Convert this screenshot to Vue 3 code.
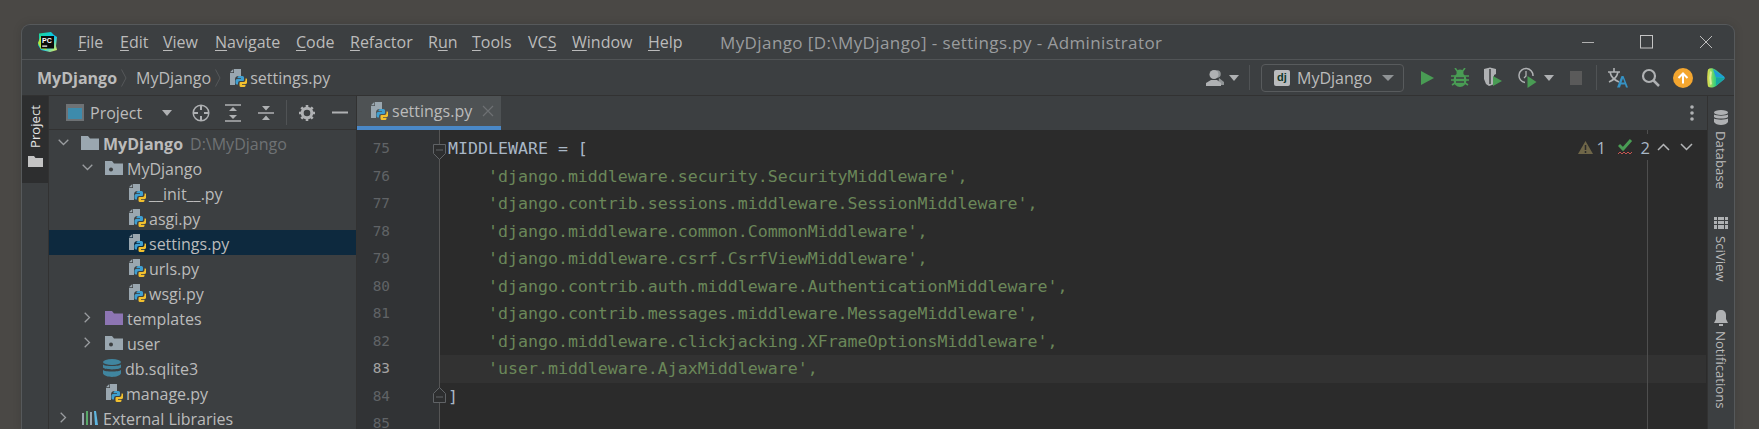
<script setup>
const menus = [
  ['', 'F', 'ile', 42], ['', 'E', 'dit', 43], ['', 'V', 'iew', 52], ['', 'N', 'avigate', 81],
  ['', 'C', 'ode', 54], ['', 'R', 'efactor', 78], ['R', 'u', 'n', 44], ['', 'T', 'ools', 56],
  ['VC', 'S', '', 44], ['', 'W', 'indow', 76], ['', 'H', 'elp', 42]
]
const tree = [
  { name: 'MyDjango', hint: 'D:\\MyDjango', icon: 'root', arrow: 'down', indent: 9, bold: true },
  { name: 'MyDjango', icon: 'pkg', arrow: 'down', indent: 33 },
  { name: '__init__.py', icon: 'py', indent: 79 },
  { name: 'asgi.py', icon: 'py', indent: 79 },
  { name: 'settings.py', icon: 'py', indent: 79, selected: true },
  { name: 'urls.py', icon: 'py', indent: 79 },
  { name: 'wsgi.py', icon: 'py', indent: 79 },
  { name: 'templates', icon: 'tpl', arrow: 'right', indent: 33 },
  { name: 'user', icon: 'pkg', arrow: 'right', indent: 33 },
  { name: 'db.sqlite3', icon: 'db', indent: 54 },
  { name: 'manage.py', icon: 'py', indent: 56 },
  { name: 'External Libraries', icon: 'lib', arrow: 'right', indent: 9 }
]
const lines = [
  { n: 75, t: 'MIDDLEWARE = [', c: 'plain' },
  { n: 76, t: "    'django.middleware.security.SecurityMiddleware'," },
  { n: 77, t: "    'django.contrib.sessions.middleware.SessionMiddleware'," },
  { n: 78, t: "    'django.middleware.common.CommonMiddleware'," },
  { n: 79, t: "    'django.middleware.csrf.CsrfViewMiddleware'," },
  { n: 80, t: "    'django.contrib.auth.middleware.AuthenticationMiddleware'," },
  { n: 81, t: "    'django.contrib.messages.middleware.MessageMiddleware'," },
  { n: 82, t: "    'django.middleware.clickjacking.XFrameOptionsMiddleware'," },
  { n: 83, t: "    'user.middleware.AjaxMiddleware',", cur: true },
  { n: 84, t: ']', c: 'plain' },
  { n: 85, t: '' }
]
</script>

<template>
  <div class="window">
    <svg class="defs" width="0" height="0">
      <symbol id="py" viewBox="0 0 18 20">
        <path d="M5 1h7v7H9.500A3.500 3.500 0 0 0 6 11.500V17H1V5h4z" fill="#9aa7b0" />
        <path d="M1 4.300 4.300 1v3.300z" fill="#9aa7b0" />
        <path d="M10 8h3.500A1.500 1.500 0 0 1 15 9.500V12a1 1 0 0 1-1 1h-3a2 2 0 0 0-2 2v1.500H8a1.500 1.500 0 0 1-1.500-1.500v-2.500A1.500 1.500 0 0 1 8 11h4v-.7H8.500V9.500A1.500 1.500 0 0 1 10 8z" fill="#3f9fd0" />
        <path d="M15.500 19h-3.500A1.500 1.500 0 0 1 10.500 17.500V15a1 1 0 0 1 1-1h3a2 2 0 0 0 2-2v-1.500h.5a1 1 0 0 1 1 1.300v3.200A1.500 1.500 0 0 1 16.500 16H13v.7h3.500V17.500A1.500 1.500 0 0 1 15.500 19z" fill="#f2c02e" />
      </symbol>
      <symbol id="folder" viewBox="0 0 18 16">
        <path d="M0 1h7l2 2.500h9V15H0z" fill="currentColor" />
      </symbol>
    </svg>

    <header class="titlebar">
      <svg class="logo" width="21" height="20" viewBox="0 0 21 20">
        <defs>
          <linearGradient id="pcg" x1="0" y1="0" x2="1" y2="1">
            <stop offset="0" stop-color="#21d789" />
            <stop offset=".55" stop-color="#07c3f2" />
            <stop offset="1" stop-color="#fcf84a" />
          </linearGradient>
        </defs>
        <path d="M2 1.500 14 0l3 3 3 2-1 9 1 4-7 2-9-2-3-5 1-5z" fill="url(#pcg)" />
        <path d="M1 11 4 4l6 14-6-1z" fill="#b6e63a" />
        <rect x="4" y="4" width="13" height="12.500" fill="#0b0b0b" />
        <text x="5" y="10.500" class="logo-text">PC</text>
        <rect x="5.200" y="13.500" width="5" height="1.200" fill="#fff" />
      </svg>
      <nav class="menu">
        <span v-for="m in menus" :key="m[1] + m[2]" class="menu-item" :style="{ width: m[3] + 'px' }">{{ m[0] }}<u>{{ m[1] }}</u>{{ m[2] }}</span>
      </nav>
      <span class="wintitle">MyDjango [D:\MyDjango] - settings.py - Administrator</span>
      <div class="winbtns">
        <svg width="14" height="14" viewBox="0 0 14 14"><path d="M1 7.500h12" stroke="#b0b0b0" fill="none" /></svg>
        <svg width="14" height="14" viewBox="0 0 14 14"><rect x=".5" y=".5" width="12" height="12.500" stroke="#c4c4c4" fill="none" /></svg>
        <svg width="14" height="14" viewBox="0 0 14 14"><path d="M1 1l12 12M13 1 1 13" stroke="#bdbdbd" fill="none" /></svg>
      </div>
    </header>

    <div class="toolbar">
      <div class="crumbs">
        <b class="crumb-bold">MyDjango</b>
        <svg class="crumb-sep" width="6" height="18" viewBox="0 0 6 18"><path d="M.5.500 5 9 .5 17.500" stroke="#55585a" fill="none" /></svg>
        <span class="crumb">MyDjango</span>
        <svg class="crumb-sep" width="6" height="18" viewBox="0 0 6 18"><path d="M.5.500 5 9 .5 17.500" stroke="#55585a" fill="none" /></svg>
        <svg class="crumb-icon" width="18" height="20"><use href="#py" /></svg>
        <span class="crumb-file">settings.py</span>
      </div>
      <div class="actions">
        <svg class="a-user" width="19" height="18" viewBox="0 0 19 18">
          <circle cx="11" cy="5" r="3.800" fill="#8f9395" />
          <path d="M13 9l5 4v3h-6z" fill="#8f9395" />
          <circle cx="8" cy="5.500" r="4.500" fill="#afb1b3" />
          <path d="M0 17v-3l5-3h6l4 3v3z" fill="#afb1b3" />
        </svg>
        <i class="tri a-tri1"></i>
        <i class="sep a-sep1"></i>
        <div class="combo">
          <span class="dj">dj</span>
          <span class="combo-name">MyDjango</span>
          <i class="tri tri-big"></i>
        </div>
        <svg class="a-play" width="13" height="14" viewBox="0 0 13 14"><path d="M0 0l13 7-13 7z" fill="#499c54" /></svg>
        <svg class="a-bug" width="18" height="20" viewBox="0 0 18 20">
          <ellipse cx="9" cy="12" rx="6.500" ry="7" fill="#499c54" />
          <path d="M4 0l3 4M14 0l-3 4M0 8h4M18 8h-4M0 12h4M18 12h-4M1 17l3-2M17 17l-3-2" stroke="#499c54" stroke-width="1.600" fill="none" />
          <circle cx="9" cy="5" r="3.500" fill="#499c54" />
          <path d="M5 10h8M5 14h8" stroke="#3c3f41" stroke-width="1.500" />
        </svg>
        <svg class="a-shield" width="19" height="21" viewBox="0 0 19 21">
          <path d="M1 2l6-1.500L13 2v5l-2 1v9l-2 1-3 1-3-2-2-5z" fill="#afb1b3" />
          <path d="M7 2v15" stroke="#3c3f41" stroke-width="1.500" />
          <path d="M10 9l9 5-9 5z" fill="#499c54" />
        </svg>
        <svg class="a-clock" width="22" height="21" viewBox="0 0 22 21">
          <path d="M8 15.500A7 7 0 1 1 16 9" stroke="#afb1b3" stroke-width="1.500" fill="none" />
          <path d="M9 4v5l-2 2" stroke="#afb1b3" stroke-width="1.300" fill="none" />
          <path d="M10.500 9l9 6-9 6z" fill="#499c54" />
        </svg>
        <i class="tri a-tri2"></i>
        <i class="a-stop"></i>
        <i class="sep a-sep2"></i>
        <svg class="a-trans" width="21" height="21" viewBox="0 0 21 21">
          <path d="M1 5h12M7 1v4M3 5c1 5 4 8 9 10M11 5c-1 5-4 8-9 10" stroke="#afb1b3" stroke-width="1.600" fill="none" />
          <path d="M10 20.500 14.500 9h2L21 20.500h-2l-1-3h-4l-1 3zM14.500 15.500h3l-1.500-4z" fill="#3592c4" fill-rule="evenodd" />
        </svg>
        <svg class="a-search" width="19" height="19" viewBox="0 0 19 19">
          <circle cx="8" cy="8" r="6" stroke="#afb1b3" stroke-width="2.200" fill="none" />
          <path d="M12.500 12.500 18 18" stroke="#afb1b3" stroke-width="2.500" />
        </svg>
        <svg class="a-up" width="20" height="20" viewBox="0 0 20 20">
          <circle cx="10" cy="10" r="10" fill="#f4a62f" />
          <path d="M10 15.500V6M5.500 10 10 5.500l4.500 4.500" stroke="#fff" stroke-width="2" fill="none" />
        </svg>
        <svg class="a-ai" width="18" height="20" viewBox="0 0 18 20">
          <defs>
            <linearGradient id="aig" x1="0" y1="0" x2="1" y2="0">
              <stop offset="0" stop-color="#e8e04a" />
              <stop offset=".45" stop-color="#36d07c" />
              <stop offset="1" stop-color="#18a8e0" />
            </linearGradient>
          </defs>
          <path d="M1 1.500C3 -.5 6 0 9 2l8 6.500c1 1 1 2 0 3L9 18c-3 2-6 2-8 .500-1-5-1-12 0-17z" fill="url(#aig)" />
          <path d="M6 1 17 9 9 9.500z" fill="#1f9bd8" />
          <path d="M9 9.500 17.500 10 9 18z" fill="#17a6a0" />
          <path d="M4 3.500c-1 4-1 9 0 13" stroke="#f5f7b8" stroke-width="2" fill="none" opacity=".7" />
        </svg>
      </div>
    </div>

    <div class="workspace">
      <aside class="stripe-left">
        <div class="stripe-project">
          <span class="stripe-project-label">Project</span>
          <svg class="stripe-project-icon" width="15" height="11" viewBox="0 0 15 11"><path d="M0 0h6l1.500 2H15v9H0z" fill="#c4c4c4" /></svg>
        </div>
      </aside>

      <section class="project">
        <div class="project-head">
          <svg class="ph-frame" width="18" height="17" viewBox="0 0 18 17">
            <rect width="18" height="17" fill="#6e7275" />
            <rect x="2" y="4" width="14" height="11" fill="#3d8bac" />
          </svg>
          <span class="ph-title">Project</span>
          <i class="tri ph-tri"></i>
          <svg class="ph-target" width="18" height="18" viewBox="0 0 18 18">
            <circle cx="9" cy="9" r="7.800" stroke="#afb1b3" stroke-width="1.500" fill="none" />
            <path d="M9 1v5M9 12v5M1 9h5M12 9h5" stroke="#afb1b3" stroke-width="2" />
          </svg>
          <svg class="ph-expand" width="16" height="18" viewBox="0 0 16 18">
            <path d="M0 1h16M0 17h16" stroke="#afb1b3" stroke-width="1.600" />
            <path d="M4 7l4-4 4 4zM4 11h8l-4 4z" fill="#afb1b3" />
          </svg>
          <svg class="ph-collapse" width="16" height="18" viewBox="0 0 16 18">
            <path d="M0 9h16" stroke="#afb1b3" stroke-width="1.600" />
            <path d="M4 2h8L8 6.500zM4 16l4-4.500 4 4.500z" fill="#afb1b3" />
          </svg>
          <i class="sep ph-sep"></i>
          <svg class="ph-gear" width="16" height="16" viewBox="0 0 16 16">
            <circle cx="8" cy="8" r="4.800" stroke="#afb1b3" stroke-width="3" fill="none" />
            <path d="M8 0v3M8 13v3M0 8h3M13 8h3M2.300 2.300l2.200 2.200M11.500 11.500l2.200 2.200M13.700 2.300l-2.200 2.200M4.500 11.500l-2.200 2.200" stroke="#afb1b3" stroke-width="2.600" />
          </svg>
          <svg class="ph-minus" width="16" height="3" viewBox="0 0 16 3"><path d="M0 1.500h16" stroke="#afb1b3" stroke-width="2" /></svg>
        </div>
        <ul class="tree">
          <li v-for="(r, i) in tree" :key="i" class="row" :class="{ selected: r.selected }" :style="{ paddingLeft: r.indent + 'px' }">
            <svg v-if="r.arrow === 'down'" class="chev" width="11" height="7" viewBox="0 0 11 7"><path d="M.7.700 5.500 5.500 10.300.700" stroke="#9a9da0" stroke-width="1.300" fill="none" /></svg>
            <svg v-else-if="r.arrow === 'right'" class="chev" width="11" height="11" viewBox="0 0 11 11"><path d="M2.700.700 7.500 5.500 2.700 10.300" stroke="#9a9da0" stroke-width="1.300" fill="none" /></svg>
            <svg v-if="r.icon === 'root'" class="ic" width="18" height="16" style="color:#9aa7b0"><use href="#folder" /></svg>
            <svg v-else-if="r.icon === 'tpl'" class="ic" width="18" height="16" style="color:#8d75b3"><use href="#folder" /></svg>
            <svg v-else-if="r.icon === 'pkg'" class="ic" width="18" height="16" viewBox="0 0 18 16">
              <path d="M0 1h7l2 2.500h9V15H0z" fill="#9aa7b0" />
              <circle cx="6" cy="9.500" r="2" fill="#3c3f41" />
            </svg>
            <svg v-else-if="r.icon === 'db'" class="ic" width="18" height="18" viewBox="0 0 18 18">
              <ellipse cx="9" cy="3" rx="9" ry="3" fill="#40859f" />
              <path d="M0 5.500C2 7.500 16 7.500 18 5.500V8.500C16 11 2 11 0 8.500zM0 11C2 13 16 13 18 11v3.500C16 19 2 19 0 14.500z" fill="#40859f" />
            </svg>
            <svg v-else-if="r.icon === 'lib'" class="ic" width="18" height="16" viewBox="0 0 18 16">
              <path d="M1 3h2v12H1z" fill="#9aa7b0" />
              <path d="M5 1h2v14H5z" fill="#59a869" />
              <path d="M9 2h2v13H9z" fill="#9aa7b0" />
              <path d="M13 1h2l2 14h-3z" fill="#5fb6e0" />
            </svg>
            <svg v-else class="ic ic-py" width="18" height="20"><use href="#py" /></svg>
            <span class="row-name" :class="{ bold: r.bold }">{{ r.name }}</span>
            <span v-if="r.hint" class="row-hint">{{ r.hint }}</span>
          </li>
        </ul>
      </section>

      <section class="main">
        <div class="tabs">
          <div class="tab">
            <svg class="tab-icon" width="18" height="20"><use href="#py" /></svg>
            <span class="tab-name">settings.py</span>
            <svg class="tab-x" width="12" height="12" viewBox="0 0 12 12"><path d="M1 1l10 10M11 1 1 11" stroke="#6d7073" stroke-width="1.200" /></svg>
          </div>
          <svg class="tabs-more" width="4" height="16" viewBox="0 0 4 16">
            <circle cx="2" cy="2" r="1.800" fill="#afb1b3" />
            <circle cx="2" cy="8" r="1.800" fill="#afb1b3" />
            <circle cx="2" cy="14" r="1.800" fill="#afb1b3" />
          </svg>
        </div>
        <div class="editor">
          <div class="gutter">
            <div v-for="l in lines" :key="l.n" class="num" :class="{ cur: l.cur }">{{ l.n }}</div>
          </div>
          <div class="code">
            <div v-for="l in lines" :key="l.n" class="line" :class="[l.c || 'str', { cur: l.cur }]">{{ l.t }}</div>
          </div>
          <i class="margin-line"></i>
          <svg class="fold fold-open" width="13" height="16" viewBox="0 0 13 16"><path d="M.5.500h12v9L6.500 15.500.5 9.500z" stroke="#606366" fill="#2d2e2f" /><path d="M3 6h7" stroke="#606366" /></svg>
          <svg class="fold fold-close" width="13" height="16" viewBox="0 0 13 16"><path d="M.5 6.500 6.500.500l6 6v9H.5z" stroke="#606366" fill="#2d2e2f" /><path d="M3 10h7" stroke="#606366" /></svg>
          <div class="inspect">
            <svg width="15" height="13" viewBox="0 0 15 13"><path d="M7.500 0 15 13H0z" fill="#6f6648" /><path d="M7.500 4v5M7.500 10v2" stroke="#2b2b2b" stroke-width="1.500" /></svg>
            <span class="ins-w">1</span>
            <svg class="ins-check" width="15" height="17" viewBox="0 0 15 17"><path d="M1 6l4 4 8-9" stroke="#499c54" stroke-width="3" fill="none" /><path d="M0 15l2-2 2 2 2-2 2 2 2-2 2 2 2-2" stroke="#c75450" fill="none" /></svg>
            <span class="ins-n">2</span>
            <svg class="ins-up" width="13" height="8" viewBox="0 0 13 8"><path d="M1 7 6.500 1.500 12 7" stroke="#b4b6b8" stroke-width="1.500" fill="none" /></svg>
            <svg class="ins-down" width="13" height="8" viewBox="0 0 13 8"><path d="M1 1 6.500 6.500 12 1" stroke="#b4b6b8" stroke-width="1.500" fill="none" /></svg>
          </div>
        </div>
      </section>

      <aside class="stripe-right">
        <svg class="sr-db" width="14" height="15" viewBox="0 0 14 15">
          <ellipse cx="7" cy="2.500" rx="7" ry="2.500" fill="#afb1b3" />
          <path d="M0 4.500C2 6 12 6 14 4.500V7C12 9 2 9 0 7zM0 8.500C2 10 12 10 14 8.500V12C12 16 2 16 0 12z" fill="#afb1b3" />
        </svg>
        <span class="sr-label sr-l1">Database</span>
        <svg class="sr-sci" width="14" height="12" viewBox="0 0 14 12">
          <path d="M0 0h14v12H0z" fill="#afb1b3" />
          <path d="M0 3.500h14M0 7.500h14M3.500 0v12M10.500 0v12" stroke="#3c3f41" stroke-width="1" />
        </svg>
        <span class="sr-label sr-l2">SciView</span>
        <svg class="sr-bell" width="14" height="16" viewBox="0 0 14 16">
          <path d="M7 0c3 0 5 2 5 5v4l2 4H0l2-4V5c0-3 2-5 5-5z" fill="#afb1b3" />
          <rect x="5" y="14" width="4" height="2" fill="#afb1b3" />
        </svg>
        <span class="sr-label sr-l3">Notifications</span>
      </aside>
    </div>
  </div>
</template>

<style>
html, body { margin: 0; background: #4a4845; overflow: hidden; }
</style>

<style scoped>
.window {
  box-sizing: border-box;
  width: 1714px;
  height: 405px;
  margin: 24px 0 0 21px;
  display: flex;
  flex-direction: column;
  overflow: hidden;
  background: #3c3f41;
  border: 1px solid #56595b;
  border-bottom: 0;
  border-radius: 9px 9px 0 0;
  box-shadow: 0 0 10px rgba(0, 0, 0, .12);
  font-family: "Open Sans", "Noto Sans", sans-serif;
  font-size: 16px;
  color: #bbbbbb;
}
.defs { position: absolute; }
i { display: block; }
svg { flex: none; display: block; }
.titlebar {
  flex: none;
  box-sizing: border-box;
  height: 35px;
  display: flex;
  align-items: center;
  padding: 0 0 0 15px;
  border-bottom: 1px solid #515456;
}
.logo-text { font: 700 7px "Liberation Sans", sans-serif; fill: #fff; }
.menu { display: flex; margin-left: 20px; }
.menu-item { color: #bbbbbb; white-space: nowrap; }
.menu-item u { text-underline-offset: 2px; }
.wintitle { margin-left: 30px; color: #9a9c9e; white-space: nowrap; font-size: 17px; letter-spacing: .4px; }
.winbtns { margin-left: auto; display: flex; gap: 45px; padding-right: 21px; }

.toolbar {
  flex: none;
  box-sizing: border-box;
  height: 36px;
  display: flex;
  align-items: center;
  border-bottom: 1px solid #323232;
}
.crumbs { display: flex; align-items: center; padding-left: 15px; }
.crumb-bold { font-weight: 700; }
.crumb-sep { margin: 0 9px 0 4px; }
.crumb-icon { margin: 0 3px 0 -1px; }
.actions { margin-left: auto; display: flex; align-items: center; padding-right: 9px; }
.tri { width: 0; height: 0; border: 5px solid transparent; border-top: 6px solid #afb1b3; border-bottom: 0; }
.sep { width: 1px; height: 25px; background: #505355; }
.a-tri1 { margin-left: 4px; }
.a-sep1 { margin-left: 10px; }
.combo {
  margin-left: 11px;
  box-sizing: border-box;
  width: 143px;
  height: 28px;
  display: flex;
  align-items: center;
  padding-left: 12px;
  border: 1.500px solid #585b5d;
  border-radius: 4px;
}
.dj {
  width: 16px;
  height: 16px;
  background: #b9bbbd;
  border-radius: 2px;
  color: #10372a;
  font: 700 11px/15px "Liberation Sans", sans-serif;
  text-align: center;
}
.combo-name { margin-left: 7px; width: 85px; }
.tri-big { border-width: 6px 6px 0; border-top-color: #8f9395; }
.a-play { margin-left: 17px; }
.a-bug { margin-left: 17px; }
.a-shield { margin-left: 14px; }
.a-clock { margin-left: 15px; }
.a-tri2 { margin-left: 5px; }
.a-stop { margin-left: 16px; width: 12px; height: 14px; background: #5a5a5a; }
.a-sep2 { margin-left: 14px; }
.a-trans { margin-left: 10px; }
.a-search { margin-left: 13px; }
.a-up { margin-left: 13px; }
.a-ai { margin-left: 14px; }

.workspace { flex: 1; min-height: 0; display: flex; }
.stripe-left { flex: none; box-sizing: border-box; width: 27px; border-right: 1px solid #323232; }
.stripe-project {
  height: 87px;
  background: #2d2e2f;
  display: flex;
  flex-direction: column;
  align-items: center;
  padding-top: 9px;
  box-sizing: border-box;
}
.stripe-project-label { writing-mode: vertical-rl; transform: rotate(180deg); color: #e4e4e4; font-size: 13.2px; }
.stripe-project-icon { margin-top: 8px; }

.project { flex: none; width: 308px; display: flex; flex-direction: column; border-right: 1px solid #323232; box-sizing: border-box; }
.project-head {
  flex: none;
  height: 34px;
  box-sizing: border-box;
  display: flex;
  align-items: center;
  padding-left: 17px;
  border-bottom: 1px solid #323232;
}
.ph-title { margin-left: 6px; width: 72px; }
.ph-target { margin-left: 20px; }
.ph-tri { margin-left: 0; }
.ph-expand { margin-left: 15px; }
.ph-collapse { margin-left: 17px; }
.ph-sep { margin-left: 12px; }
.ph-gear { margin-left: 12px; }
.ph-minus { margin-left: 17px; }
.tree { list-style: none; margin: 0; padding: 0; }
.row {
  height: 25px;
  display: flex;
  align-items: center;
  white-space: nowrap;
  position: relative;
}
.row.selected { background: #0d293e; }
.chev { width: 11px; margin-right: 12px; }
.row-name { margin-left: 4px; padding-top: 2px; }
.row-name.bold { font-weight: 700; }
.row-hint { margin-left: 7px; padding-top: 2px; color: #6f7274; }
.ic-py { margin-right: -1px; }

.main { flex: 1; min-width: 0; display: flex; flex-direction: column; }
.tabs {
  flex: none;
  height: 34px;
  display: flex;
  align-items: center;
  justify-content: space-between;
  padding-right: 13px;
}
.tab {
  box-sizing: border-box;
  width: 144px;
  height: 34px;
  background: #4e5254;
  border-bottom: 4px solid #4a88c7;
  display: flex;
  align-items: center;
  padding-left: 13px;
}
.tab-name { margin-left: 4px; width: 90px; }
.editor { flex: 1; min-height: 0; display: flex; position: relative; background: #2b2b2b; overflow: hidden; }
.gutter {
  flex: none;
  width: 83px;
  box-sizing: border-box;
  padding: 5px 49px 0 0;
  background: #313335;
  border-right: 1px solid #555555;
  text-align: right;
  font: 14.4px/27.5px "DejaVu Sans Mono", monospace;
  color: #606366;
}
.num.cur { color: #a4a3a3; }
.code {
  flex: 1;
  padding-top: 5px;
  padding-right: 1px;
  font: 16.6px/27.5px "DejaVu Sans Mono", monospace;
  white-space: pre;
}
.line { height: 27.5px; padding-left: 8px; }
.line.plain { color: #a9b7c6; }
.line.str { color: #6a8759; }
.line.cur { background: #323232; }
.margin-line { position: absolute; left: 1290px; top: 0; bottom: 0; width: 1px; background: #4e4e4e; }
.fold { position: absolute; left: 76px; }
.fold-open { top: 14px; }
.fold-close { top: 257px; }
.inspect {
  position: absolute;
  right: 14px;
  top: 4px;
  height: 26px;
  display: flex;
  align-items: center;
  background: #2b2b2b;
  font-size: 16.5px;
  color: #a9b7c6;
}
.ins-w { margin-left: 4px; width: 9px; }
.ins-check { margin-left: 12px; }
.ins-n { margin-left: 8px; }
.ins-up { margin-left: 7px; }
.ins-down { margin-left: 10px; }

.stripe-right { flex: none; width: 27px; position: relative; border-left: 1px solid #323232; box-sizing: border-box; display: flex; flex-direction: column; align-items: center; }
.sr-db { margin-top: 14px; }
.sr-label { writing-mode: vertical-rl; font-size: 13.2px; color: #bbbbbb; }
.sr-l1 { margin-top: 6px; }
.sr-sci { margin-top: 28px; }
.sr-l2 { margin-top: 7px; }
.sr-bell { margin-top: 28px; }
.sr-l3 { margin-top: 5px; }
</style>
